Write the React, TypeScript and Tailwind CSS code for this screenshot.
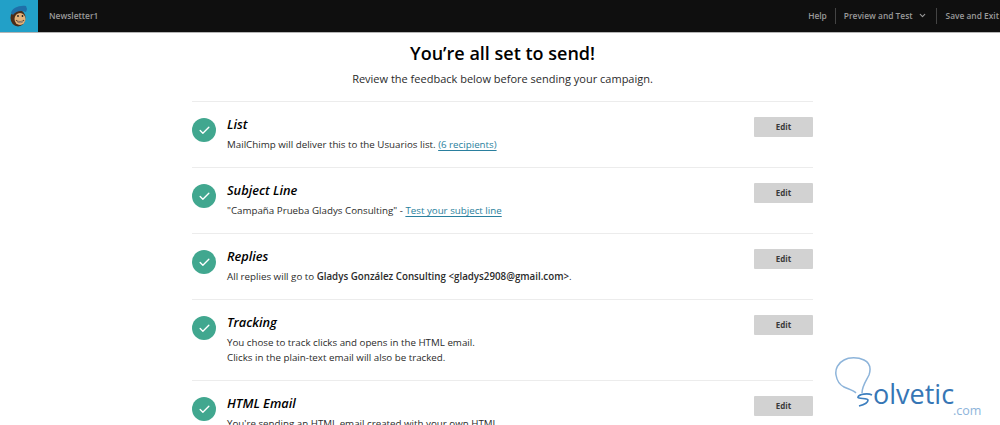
import { Check, ChevronDown } from "lucide-react";
import type { ReactNode } from "react";

function Row({ title, children }: { title: string; children: ReactNode }) {
  return (
    <div className="flex items-start border-t border-[#ececec] pt-[15px] pb-[15px]">
      <div className="mt-[1px] flex h-[24px] w-[24px] shrink-0 items-center justify-center rounded-full bg-[#41a78f]">
        <Check size={13} strokeWidth={2.5} className="text-white" />
      </div>
      <div className="-mt-[2px] ml-[11px] flex-1">
        <h3 className="text-[12.8px] leading-[18px] font-semibold italic text-black">{title}</h3>
        <div className="mt-[4px] text-[9.75px] leading-[15px] text-[#2b2b2b]">{children}</div>
      </div>
      <button className="h-[20px] w-[59px] rounded-[1px] bg-[#d2d2d2] text-[8px] font-bold text-[#3a3a3a]">Edit</button>
    </div>
  );
}

function MonkeyLogo() {
  return (
    <svg width="20" height="22" viewBox="0 0 20 22">
      <ellipse cx="9" cy="13" rx="7.5" ry="8.5" fill="#4a2d18" />
      <path d="M2 8C3 3 10 0 17 1l1 3-1 3C12 5 7 6 4 10z" fill="#1f6fa8" />
      <ellipse cx="11" cy="14" rx="5.5" ry="6" fill="#e3b27a" />
      <circle cx="9" cy="11" r=".9" fill="#222" />
      <circle cx="13.5" cy="11" r=".9" fill="#222" />
      <path d="M7 15c2 2 6 2 8 0-1 3-6 4-8 0z" fill="#fff" stroke="#3a2414" strokeWidth=".6" />
    </svg>
  );
}

function SolveticMark() {
  return (
    <div className="absolute left-[835px] top-[356px] h-[66px] w-[155px]">
      <svg width="42" height="54" viewBox="0 0 42 54" className="absolute left-0 top-0" fill="none">
        <path
          d="M27 37c0-7 4-12 7-18 2-6 1-12-5-15-6-3-15-3-20 0C3 7 0 13 1 19c1 6 4 10 8 12 4 2 9 3 12 6"
          stroke="#8db4da"
          strokeWidth="1.5"
        />
        <path d="M37 39c-4-2-13-1-14 2-1 2 10 1 10 3 0 3-5 5-9 6" stroke="#3d7fbf" strokeWidth="1.7" />
      </svg>
      <span className="absolute left-[38px] top-[22px] text-[27px] leading-[32px] text-[#3676b5]">olvetic</span>
      <span className="absolute left-[118px] top-[47px] text-[12.5px] leading-[16px] text-[#8db4da]">.com</span>
    </div>
  );
}

export default function App() {
  return (
    <div className="relative h-[425px] overflow-hidden bg-white font-['Open_Sans',sans-serif]">
      <header className="flex h-[33px] items-stretch border-b border-[#b5b5b5] bg-[#0f0f0f] text-[8.4px] font-semibold text-[#9a9a9a]">
        <div className="flex w-[38px] items-center justify-center bg-[#22a0c8]">
          <MonkeyLogo />
        </div>
        <div className="ml-[11px] flex items-center">Newsletter1</div>
        <nav className="ml-auto flex items-center">
          <span>Help</span>
          <span className="mx-[8px] h-[16px] w-px bg-[#444]" />
          <span className="flex items-center gap-[5px]">
            Preview and Test <ChevronDown size={9} strokeWidth={3} />
          </span>
          <span className="mx-[9px] h-[16px] w-px bg-[#444]" />
          <span className="mr-[1px] whitespace-nowrap">Save and Exit</span>
        </nav>
      </header>

      <main className="ml-[192px] w-[621px]">
        <h1 className="mt-[5px] text-center text-[18px] leading-[30px] font-semibold text-black">You’re all set to send!</h1>
        <p className="mt-[2px] mb-[13px] text-center text-[11px] leading-[18px] text-[#2b2b2b]">
          Review the feedback below before sending your campaign.
        </p>

        <Row title="List">
          MailChimp will deliver this to the Usuarios list.{" "}
          <a className="text-[#2a7f9e] underline underline-offset-2">(6 recipients)</a>
        </Row>
        <Row title="Subject Line">
          "Campaña Prueba Gladys Consulting" -{" "}
          <a className="text-[#2a7f9e] underline underline-offset-2">Test your subject line</a>
        </Row>
        <Row title="Replies">
          All replies will go to <b className="font-semibold">Gladys González Consulting &lt;gladys2908@gmail.com&gt;</b>.
        </Row>
        <Row title="Tracking">
          You chose to track clicks and opens in the HTML email.
          <br />
          Clicks in the plain-text email will also be tracked.
        </Row>
        <Row title="HTML Email">You're sending an HTML email created with your own HTML.</Row>
      </main>

      <SolveticMark />
    </div>
  );
}
